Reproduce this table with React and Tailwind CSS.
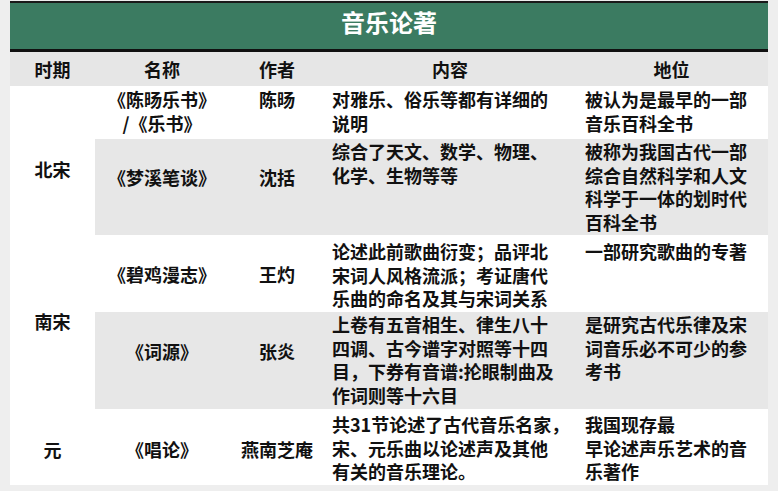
import React from 'react';

const font = { fontFamily: '"Noto Sans CJK SC", "Noto Sans", sans-serif' };

// rows of the lower table; gray = shaded band (from name column rightwards)
const rows = [
  {
    name: ['《陈旸乐书》', '/《乐书》'], author: '陈旸', nameTop: 'pt-[2px]',
    content: ['对雅乐、俗乐等都有详细的', '说明'], contentTop: 'pt-[2px]',
    status: ['被认为是最早的一部', '音乐百科全书'], statusTop: 'pt-[2px]',
    gray: false,
  },
  {
    name: ['《梦溪笔谈》'], author: '沈括', nameTop: 'pt-[27px]',
    content: ['综合了天文、数学、物理、', '化学、生物等等'], contentTop: 'pt-[1px]',
    status: ['被称为我国古代一部', '综合自然科学和人文', '科学于一体的划时代', '百科全书'], statusTop: 'pt-[1px]',
    gray: true,
  },
  {
    name: ['《碧鸡漫志》'], author: '王灼', nameTop: 'pt-[28px]',
    content: ['论述此前歌曲衍变；品评北', '宋词人风格流派；考证唐代', '乐曲的命名及其与宋词关系'], contentTop: 'pt-[5px]',
    status: ['一部研究歌曲的专著'], statusTop: 'pt-[5px]',
    gray: false,
  },
  {
    name: ['《词源》'], author: '张炎', nameTop: 'pt-[28px]',
    content: ['上卷有五音相生、律生八十', '四调、古今谱字对照等十四', '目，下券有音谱:抡眼制曲及', '作词则等十六目'], contentTop: 'pt-[1px]',
    status: ['是研究古代乐律及宋', '词音乐必不可少的参', '考书'], statusTop: 'pt-[1px]',
    gray: true,
  },
  {
    name: ['《唱论》'], author: '燕南芝庵', nameTop: 'pt-[29px]',
    content: ['共31节论述了古代音乐名家，', '宋、元乐曲以论述声及其他', '有关的音乐理论。'], contentTop: 'pt-[4px]',
    status: ['我国现存最', '早论述声乐艺术的音', '乐著作'], statusTop: 'pt-[4px]',
    gray: false,
  },
];

const rowStart = ['row-start-1', 'row-start-2', 'row-start-3', 'row-start-4', 'row-start-5'];

function Lines({ lines }) {
  return lines.map((l, i) => <div key={i} className="whitespace-nowrap">{l}</div>);
}

export default function App() {
  return (
    <div className="w-full h-[491px] bg-[#eeeeee] pt-[1px] px-[10px]" style={font}>
      <div className="w-[758px] border-t-2 border-[#1a1a1a]">
        {/* title */}
        <div className="h-[46px] bg-[#3b7b61] flex justify-center pt-[4px]">
          <span className="text-[24px] leading-[30px] font-bold text-white">音乐论著</span>
        </div>
        <div className="h-[3px] bg-[#111]" />

        {/* header row */}
        <div className="h-[34px] bg-[#e6e6e6] grid grid-cols-[85px_134px_96px_250px_193px] items-center text-[18px] font-bold text-[#111] text-center leading-[24px]">
          <div>时期</div>
          <div>名称</div>
          <div>作者</div>
          <div>内容</div>
          <div>地位</div>
        </div>

        {/* body */}
        <div className="grid grid-cols-[85px_134px_96px_250px_193px] grid-rows-[53px_96px_77px_97px_76px] bg-white text-[18px] font-bold text-[#111] leading-[23.5px]">
          <div className="col-start-1 row-start-1 row-span-2 text-center pt-[72px]">北宋</div>
          <div className="col-start-1 row-start-3 row-span-2 text-center pt-[75px]">南宋</div>
          <div className="col-start-1 row-start-5 text-center pt-[29px]">元</div>

          {rows.map((r, i) => (
            <React.Fragment key={i}>
              <div className={`col-start-2 ${rowStart[i]} text-center ${r.nameTop} ${r.gray ? 'bg-[#e7e7e7]' : ''}`}>
                <Lines lines={r.name} />
              </div>
              <div className={`col-start-3 ${rowStart[i]} text-center ${r.nameTop} ${r.gray ? 'bg-[#e7e7e7]' : ''} ${i === 0 ? 'pt-[2px]' : ''}`}>
                {r.author}
              </div>
              <div className={`col-start-4 ${rowStart[i]} pl-[7px] ${r.contentTop} ${r.gray ? 'bg-[#e7e7e7]' : ''}`}>
                <Lines lines={r.content} />
              </div>
              <div className={`col-start-5 ${rowStart[i]} pl-[10px] ${r.statusTop} ${r.gray ? 'bg-[#e7e7e7]' : ''}`}>
                <Lines lines={r.status} />
              </div>
            </React.Fragment>
          ))}
        </div>
      </div>
    </div>
  );
}
